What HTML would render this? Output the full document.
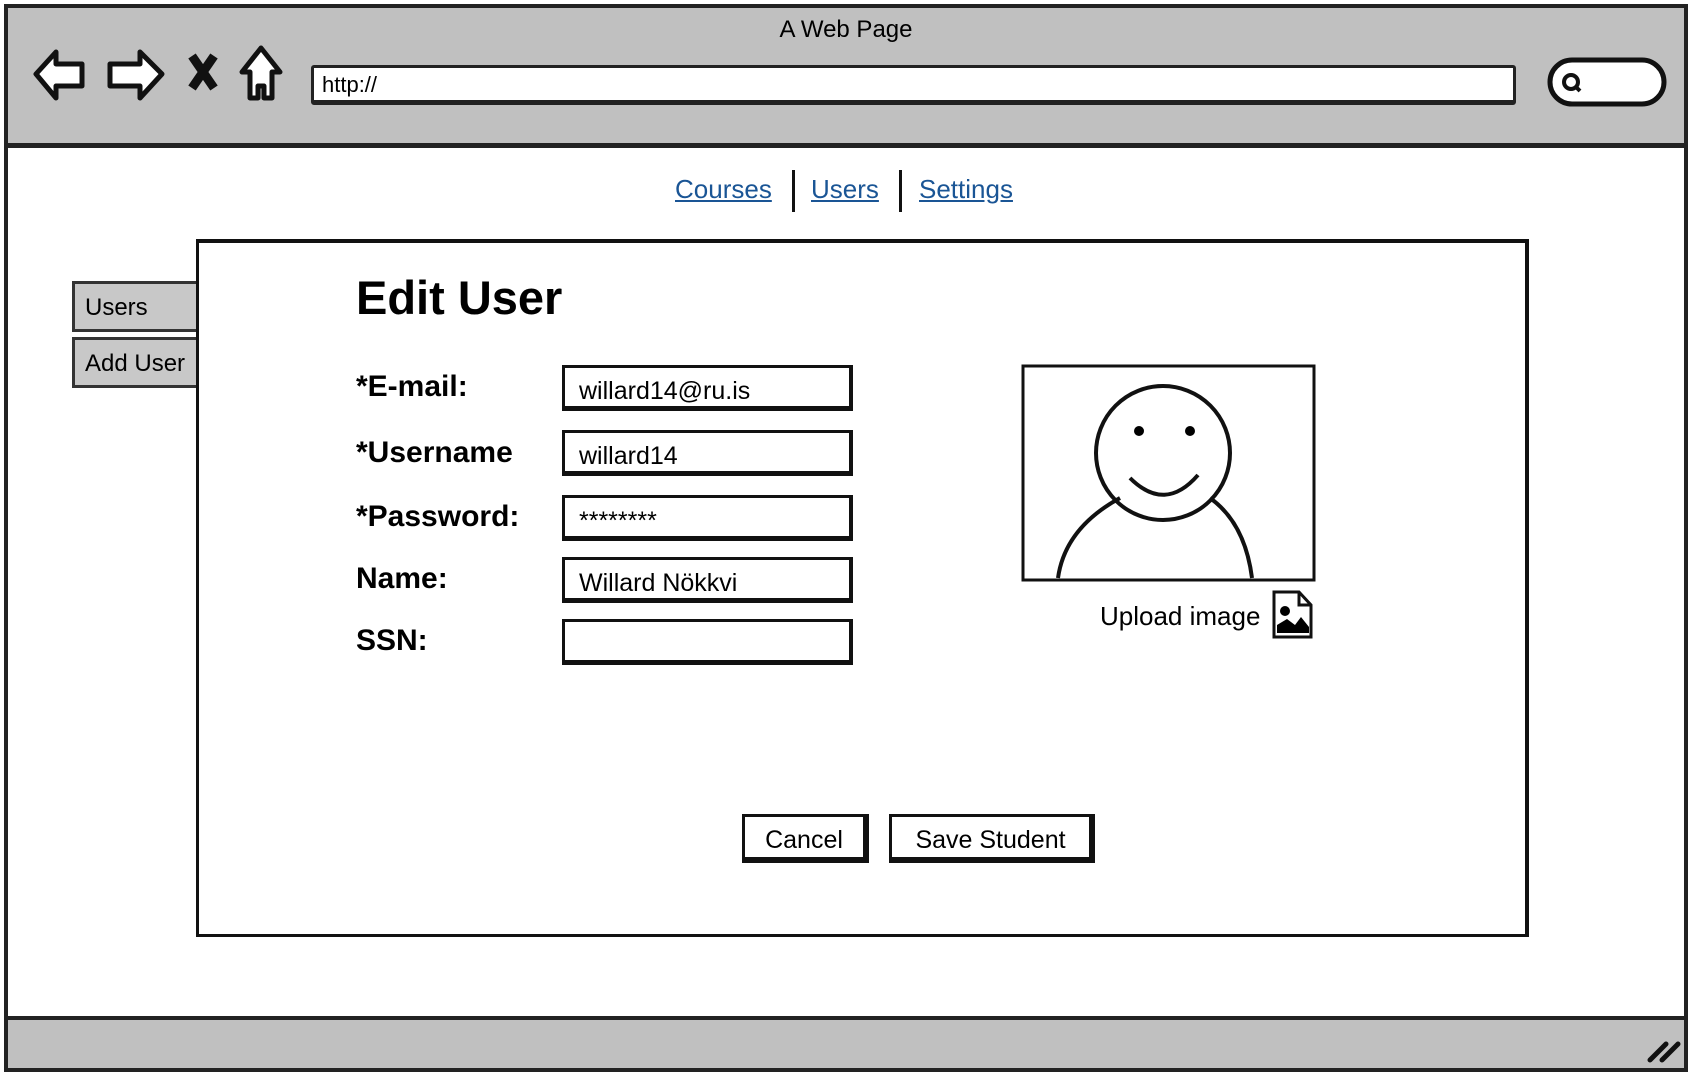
<!DOCTYPE html>
<html><head><meta charset="utf-8"><style>
*{box-sizing:border-box;margin:0;padding:0}
body{width:1692px;height:1076px;background:#fff;font-family:"Liberation Sans",sans-serif;color:#000;position:relative;overflow:hidden}
.abs{position:absolute}
.frame{left:4px;top:4px;width:1684px;height:1068px;border:4px solid #222;background:#fff}
.top{left:4px;top:4px;width:1684px;height:144px;background:#c0c0c0;border:4px solid #222;border-bottom-width:5px}
.bot{left:4px;top:1016px;width:1684px;height:56px;background:#c0c0c0;border:4px solid #222}
.url{left:311px;top:65px;width:1205px;height:40px;background:#fff;border:3px solid #222;border-bottom-width:5px;border-radius:3px;font-size:22px;padding:4px 8px}
.nav a{position:absolute;color:#1a5595;text-decoration:underline;font-size:26px;top:174px}
.sep{position:absolute;width:3px;height:42px;background:#111;top:170px}
.panel{left:196px;top:239px;width:1333px;height:698px;border:3px solid #111;border-top-width:4px;border-right-width:4px;background:#fff}
.tab{left:72px;width:126px;height:51px;background:#c8c8c8;border:3px solid #333;border-right:none;font-size:24px;padding:10px 0 0 10px}
.lbl{left:356px;font-size:30px;font-weight:bold}
.inp{left:562px;width:291px;height:46px;border:3px solid #111;border-bottom-width:5px;border-right-width:4px;font-size:25px;padding:9px 14px 0}
.btn{height:49px;border:3px solid #111;border-bottom-width:6px;border-right-width:6px;font-size:25px;text-align:center;padding-top:9px;background:#fff}
</style></head><body>
<div class="abs frame"></div>
<div class="abs top"></div>
<div class="abs" style="left:0;width:1692px;top:16px;text-align:center;font-size:24px">A Web Page</div>
<svg class="abs" style="left:30px;top:44px" width="260" height="62" viewBox="0 0 260 62">
<path d="M6 30 L26 8 L26 20 L52 20 L52 42 L26 42 L26 54 Z" fill="#fff" stroke="#111" stroke-width="5" stroke-linejoin="round"/>
<path d="M132 30 L110 8 L110 20 L80 20 L80 42 L110 42 L110 54 Z" fill="#fff" stroke="#111" stroke-width="5" stroke-linejoin="round"/>
<path d="M162 12 L184 44 M184 12 L162 44" stroke="#111" stroke-width="9"/>
<path d="M231 4 L212 28 L220 28 L220 54 L228 54 L228 42 L234 42 L234 54 L242 54 L242 28 L250 28 Z" fill="#fff" stroke="#111" stroke-width="5" stroke-linejoin="round"/>
</svg>
<div class="abs url">http://</div>
<svg class="abs" style="left:1547px;top:57px" width="122" height="52"><rect x="3" y="3" width="114" height="44" rx="22" fill="#fff" stroke="#111" stroke-width="5"/><circle cx="24" cy="25" r="7" fill="none" stroke="#111" stroke-width="4"/><path d="M28 29 L33 34" stroke="#111" stroke-width="4"/></svg>
<div class="nav"><a style="left:675px">Courses</a><div class="sep" style="left:792px"></div><a style="left:811px">Users</a><div class="sep" style="left:899px"></div><a style="left:919px">Settings</a></div>
<div class="abs tab" style="top:281px">Users</div>
<div class="abs tab" style="top:337px">Add User</div>
<div class="abs panel"></div>
<div class="abs" style="left:356px;top:270px;font-size:47px;font-weight:bold">Edit User</div>
<div class="abs lbl" style="top:370px">*E-mail:</div>
<div class="abs lbl" style="top:436px">*Username</div>
<div class="abs lbl" style="top:500px">*Password:</div>
<div class="abs lbl" style="top:562px">Name:</div>
<div class="abs lbl" style="top:624px">SSN:</div>
<div class="abs inp" style="top:365px">willard14@ru.is</div>
<div class="abs inp" style="top:430px">willard14</div>
<div class="abs inp" style="top:495px">********</div>
<div class="abs inp" style="top:557px">Willard Nökkvi</div>
<div class="abs inp" style="top:619px"></div>
<svg class="abs" style="left:1020px;top:363px" width="298" height="220">
<rect x="3" y="3" width="291" height="214" fill="#fff" stroke="#111" stroke-width="3"/>
<circle cx="143" cy="90" r="67" fill="none" stroke="#111" stroke-width="4"/>
<circle cx="119" cy="68" r="5"/><circle cx="170" cy="68" r="5"/>
<path d="M110 115 Q145 150 178 112" fill="none" stroke="#111" stroke-width="4"/>
<path d="M38 215 Q45 165 100 135 M190 135 Q225 160 232 215" fill="none" stroke="#111" stroke-width="4"/>
</svg>
<div class="abs" style="left:1100px;top:601px;font-size:26px">Upload image</div>
<svg class="abs" style="left:1271px;top:589px" width="44" height="52"><path d="M3 3 L28 3 L40 16 L40 48 L3 48 Z" fill="#fff" stroke="#111" stroke-width="3"/><path d="M28 3 L28 16 L40 16" fill="none" stroke="#111" stroke-width="3"/><circle cx="14" cy="22" r="5"/><path d="M6 44 L6 36 L16 30 L24 36 L30 28 L38 38 L38 44 Z"/></svg>
<div class="abs btn" style="left:742px;top:814px;width:127px">Cancel</div>
<div class="abs btn" style="left:889px;top:814px;width:206px">Save Student</div>
<div class="abs bot"></div>
<svg class="abs" style="left:1646px;top:1034px" width="36" height="30"><path d="M4 26 L20 10 M16 26 L32 10" stroke="#111" stroke-width="5" stroke-linecap="round"/></svg>
</body></html>
